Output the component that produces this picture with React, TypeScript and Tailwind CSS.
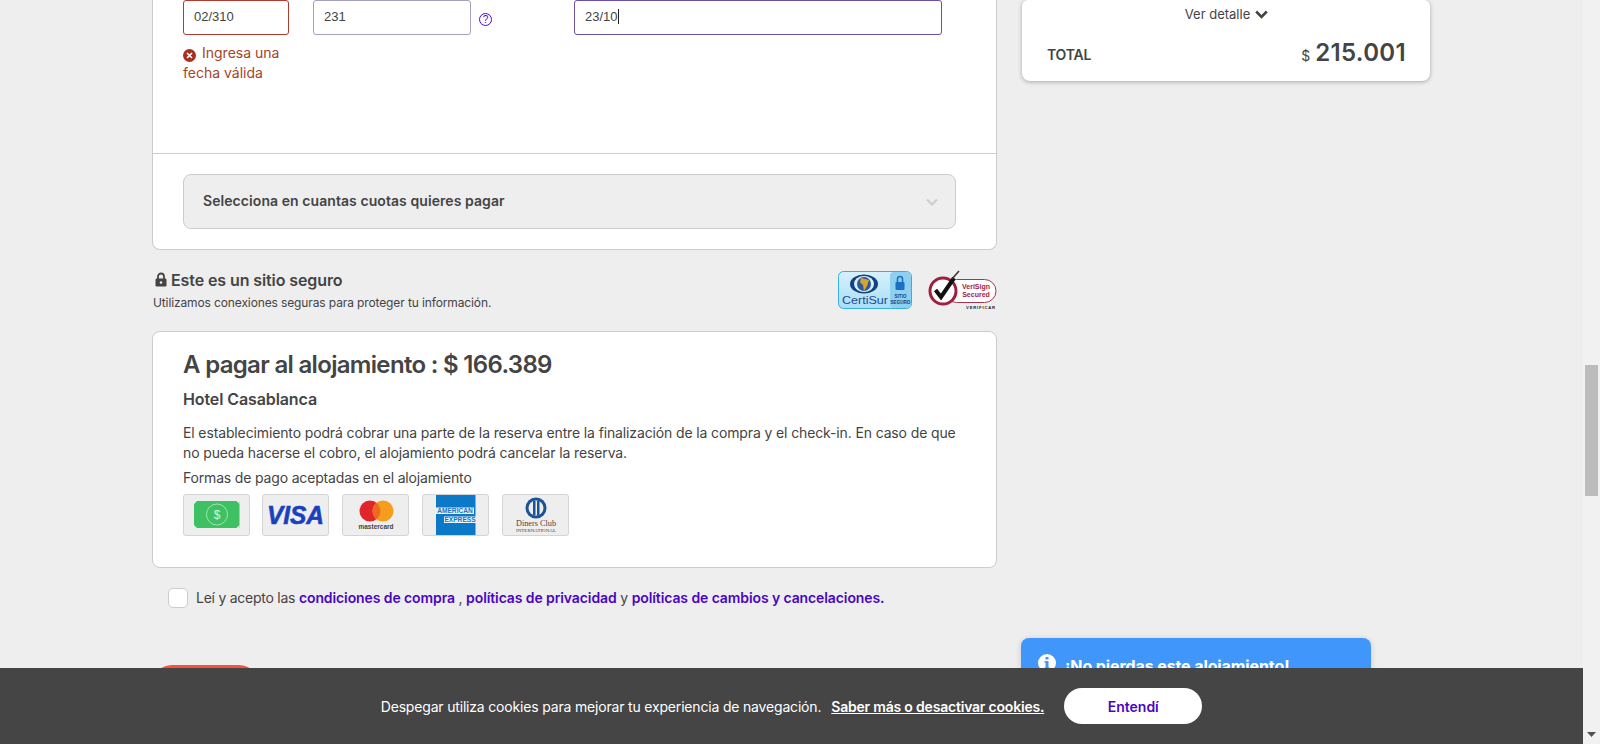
import React from "react";

const sans = "font-['Inter','Roboto','Liberation_Sans',sans-serif]";

function PayTile({ children, className = "" }: { children: React.ReactNode; className?: string }) {
  return (
    <div className={`w-[67px] h-[42px] bg-[#eeeeee] border border-[#d4d4d4] rounded-[3px] overflow-hidden ${className}`}>
      <svg width="65" height="40" viewBox="0 0 65 40">{children}</svg>
    </div>
  );
}

function Certisur() {
  return (
    <svg width="74" height="38" viewBox="0 0 74 38">
      <defs>
        <linearGradient id="cs" x1="0" y1="0" x2="0" y2="1">
          <stop offset="0" stopColor="#d6f1fc" />
          <stop offset="1" stopColor="#a9def7" />
        </linearGradient>
      </defs>
      <rect x="0.5" y="0.5" width="73" height="37" rx="5" fill="url(#cs)" stroke="#35aee6" />
      <rect x="52" y="1" width="21" height="36" rx="4" fill="#8dd0ef" />
      <ellipse cx="26" cy="13" rx="14" ry="9.5" fill="#17407f" />
      <ellipse cx="26" cy="13" rx="10" ry="8" fill="#d6f1fc" />
      <circle cx="26" cy="13" r="7" fill="#2a5a9a" />
      <path d="M23 7 L31 9 L29 15 L26 20 L25 14 L22 11 Z" fill="#d9a32c" />
      <text x="4" y="33" fontSize="11.5" fontFamily="Liberation Sans" fill="#1c4a96" textLength="46" lengthAdjust="spacingAndGlyphs">CertiSur</text>
      <rect x="57.5" y="11" width="9" height="8" rx="1" fill="#1d6fc0" />
      <path d="M59.5 11 V8 a2.5 2.5 0 0 1 5 0 V11" fill="none" stroke="#1d6fc0" strokeWidth="1.6" />
      <text x="62.5" y="27" textAnchor="middle" fontSize="4.6" fontWeight="700" fontFamily="Liberation Sans" fill="#16407e">SITIO</text>
      <text x="62.5" y="33" textAnchor="middle" fontSize="4.6" fontWeight="700" fontFamily="Liberation Sans" fill="#16407e">SEGURO</text>
    </svg>
  );
}

function Verisign() {
  return (
    <svg width="70" height="40" viewBox="0 0 70 40">
      <rect x="18" y="9.5" width="51" height="23" rx="11.5" fill="#fff" stroke="#a8334f" strokeWidth="1" />
      <circle cx="16" cy="21" r="13" fill="#fff" stroke="#a01f3f" strokeWidth="3" />
      <path d="M8.5 20 L14 27 L27 8" fill="none" stroke="#111" strokeWidth="4" />
      <path d="M25 9 L32 1" stroke="#333" strokeWidth="1.5" />
      <text x="49" y="19" textAnchor="middle" fontSize="7" fontWeight="700" fontFamily="Liberation Sans" fill="#a8213f">VeriSign</text>
      <text x="49" y="27" textAnchor="middle" fontSize="7" fontWeight="700" fontFamily="Liberation Sans" fill="#a8213f">Secured</text>
      <text x="54" y="38.5" textAnchor="middle" fontSize="4.2" fontWeight="700" letterSpacing="0.8" fontFamily="Liberation Sans" fill="#222">VERIFICAR</text>
    </svg>
  );
}

export default function App() {
  return (
    <div className={`relative h-[744px] w-[1600px] overflow-hidden bg-[#eeeeee] text-[#444444] ${sans}`}>
      <div className="flex h-full">
        <div className="flex flex-1 pl-[152px] gap-[25px] items-start">
          {/* Left column */}
          <div className="w-[845px] flex flex-col">
            <section className="bg-white border border-t-0 border-[#cccccc] rounded-b-lg">
              <div className="h-[153px] flex pl-[30px]">
                <div className="w-[130px]">
                  <div className="w-[106px] h-[35px] border border-[#b03a2e] rounded-[3px] pl-[10px] pb-[2px] flex items-center text-[13px] font-['Liberation_Sans',sans-serif]">
                    02/310
                  </div>
                  <p className="w-[106px] mt-[8px] text-[14px] leading-[20.4px] text-[#a3442b]">
                    <span className="inline-flex w-[13px] h-[13px] mr-[6px] align-[-1px] rounded-full bg-[#a5301f] items-center justify-center">
                      <svg width="7" height="7" viewBox="0 0 7 7">
                        <path d="M1 1 L6 6 M6 1 L1 6" stroke="#fff" strokeWidth="1.6" />
                      </svg>
                    </span>
                    Ingresa una fecha válida
                  </p>
                </div>
                <div className="w-[261px] flex items-start">
                  <div className="w-[158px] h-[35px] border border-[#a79fbd] rounded-[3px] pl-[10px] pb-[2px] flex items-center text-[13px] font-['Liberation_Sans',sans-serif]">
                    231
                  </div>
                  <span className="ml-[8px] mt-[13px] w-[13px] h-[13px] rounded-full border border-[#4f08d8] text-[#4f08d8] text-[10px] leading-[11px] text-center font-['Liberation_Sans',sans-serif]">
                    ?
                  </span>
                </div>
                <div className="w-[368px] h-[35px] border border-[#6a4fa3] rounded-[3px] pl-[10px] pb-[2px] flex items-center text-[13px] font-['Liberation_Sans',sans-serif]">
                  23/10
                  <span className="w-px h-[15px] bg-[#222222]" />
                </div>
              </div>
              <div className="border-t border-[#cccccc] pt-[20px] pb-[20px] pl-[30px] pr-[40px]">
                <div className="h-[55px] bg-[#eeeeee] border border-[#cccccc] rounded-lg flex items-center justify-between pl-[19px] pr-[17px]">
                  <span className="pb-[2px] text-[14px] font-semibold tracking-[0.07px]">Selecciona en cuantas cuotas quieres pagar</span>
                  <svg width="12" height="8" viewBox="0 0 12 8">
                    <path d="M1 1.5 L6 6.5 L11 1.5" fill="none" stroke="#cccccc" strokeWidth="2" />
                  </svg>
                </div>
              </div>
            </section>

            <section className="mt-[20px] h-[40px] flex items-center justify-between">
              <div className="pl-px pb-px">
                <div className="flex items-center text-[16px] leading-[20px] font-semibold tracking-[-0.1px]">
                  <svg className="ml-[2px] mr-[4px]" width="12" height="15" viewBox="0 0 12 15">
                    <path d="M3 7 V4.5 a3 3 0 0 1 6 0 V7" fill="none" stroke="#444" strokeWidth="1.8" />
                    <rect x="0.5" y="6.5" width="11" height="8" rx="1.2" fill="#444" />
                    <circle cx="6" cy="10.5" r="1.3" fill="#eee" />
                  </svg>
                  Este es un sitio seguro
                </div>
                <p className="mt-[6px] text-[12px] leading-[14px] tracking-[-0.12px]">Utilizamos conexiones seguras para proteger tu información.</p>
              </div>
              <div className="flex items-center gap-[15px]">
                <Certisur />
                <Verisign />
              </div>
            </section>

            <section className="mt-[21px] h-[237px] bg-white border border-[#cccccc] rounded-lg pl-[30px] pt-[18px]">
              <h2 className="text-[24px] leading-[30px] font-semibold tracking-[-0.68px]">A pagar al alojamiento : $ 166.389</h2>
              <h3 className="mt-[9px] text-[16px] leading-[20px] font-semibold tracking-[-0.1px]">Hotel Casablanca</h3>
              <p className="mt-[14px] text-[14px] leading-[20px] whitespace-nowrap tracking-[-0.13px]">
                El establecimiento podrá cobrar una parte de la reserva entre la finalización de la compra y el check-in. En caso de que
                <br />
                no pueda hacerse el cobro, el alojamiento podrá cancelar la reserva.
              </p>
              <p className="mt-[5px] text-[14px] leading-[20px] tracking-[-0.17px]">Formas de pago aceptadas en el alojamiento</p>
              <div className="mt-[6px] flex gap-[13px]">
                <PayTile className="mr-[-1px]">
                  <rect x="10" y="6" width="45.5" height="27" fill="#3fc163" />
                  <path d="M10 6 h3 l-3 3 Z M55.5 6 h-3 l3 3 Z M10 33 h3 l-3 -3 Z M55.5 33 h-3 l3 -3 Z" fill="#e9f7ec" />
                  <circle cx="33" cy="19.5" r="10.5" fill="none" stroke="#9fe3b0" strokeWidth="1" />
                  <text x="33" y="24" textAnchor="middle" fontSize="12" fontFamily="Liberation Sans" fill="#d6f5de">$</text>
                </PayTile>
                <PayTile>
                  <text x="4" y="29" fontSize="26" fontWeight="700" fontStyle="italic" fontFamily="Liberation Sans" fill="#1a3fc0" stroke="#1a3fc0" strokeWidth="0.6" textLength="57" lengthAdjust="spacingAndGlyphs">VISA</text>
                </PayTile>
                <PayTile>
                  <circle cx="27" cy="16" r="10.5" fill="#e0262a" />
                  <circle cx="40" cy="16" r="10.5" fill="#f59e1e" />
                  <path d="M33.5 7.8 a10.5 10.5 0 0 1 0 16.4 a10.5 10.5 0 0 1 0 -16.4 Z" fill="#ee6a1f" />
                  <text x="33" y="34" textAnchor="middle" fontSize="6.5" fontWeight="700" fontFamily="Liberation Sans" fill="#444">mastercard</text>
                </PayTile>
                <PayTile>
                  <rect x="13" y="0" width="39.5" height="40" fill="#0b78c8" />
                  <rect x="13" y="12.5" width="38" height="6.5" fill="#e9f4fb" />
                  <rect x="21" y="21.5" width="32" height="6.5" fill="#e9f4fb" />
                  <text x="32" y="18" textAnchor="middle" fontSize="6.6" fontWeight="700" fontFamily="Liberation Sans" fill="#0b78c8">AMERICAN</text>
                  <text x="37" y="27" textAnchor="middle" fontSize="6.6" fontWeight="700" fontFamily="Liberation Sans" fill="#0b78c8">EXPRESS</text>
                </PayTile>
                <PayTile>
                  <circle cx="33" cy="13" r="10.5" fill="#1b5394" />
                  <circle cx="33" cy="13" r="7.5" fill="#eeeeee" />
                  <rect x="30" y="6" width="2.5" height="14" fill="#1b5394" />
                  <rect x="34" y="6" width="2.5" height="14" fill="#1b5394" />
                  <text x="33" y="31" textAnchor="middle" fontSize="9" fontFamily="Liberation Serif" fill="#444" textLength="40" lengthAdjust="spacingAndGlyphs">Diners Club</text>
                  <text x="33" y="36.5" textAnchor="middle" fontSize="4.5" fontFamily="Liberation Serif" fill="#444" textLength="40" lengthAdjust="spacingAndGlyphs">INTERNATIONAL</text>
                </PayTile>
              </div>
            </section>

            <div className="mt-[19px] ml-[16px] flex items-center text-[14px]">
              <span className="w-[20px] h-[20px] bg-white border border-[#cccccc] rounded-[5px]" />
              <p className="ml-[8px] pb-px whitespace-nowrap tracking-[-0.25px]">
                Leí y acepto las{" "}
                <a className="font-semibold text-[#4a06c4] tracking-[-0.1px]">condiciones de compra</a> ,{" "}
                <a className="font-semibold text-[#4a06c4] tracking-[-0.1px]">políticas de privacidad</a> y{" "}
                <a className="font-semibold text-[#4a06c4] tracking-[-0.1px]">políticas de cambios y cancelaciones.</a>
              </p>
            </div>

            <div className="mt-[56px] w-[107px] h-[48px] rounded-[20px] bg-[#f9503f]" />
          </div>

          {/* Right column */}
          <div className="w-[408px] flex flex-col">
            <section className="h-[81px] bg-white rounded-b-lg rounded-t-md shadow-[0_1px_4px_rgba(0,0,0,0.3)] pl-[25px] pr-[24px]">
              <div className="pt-[6px] flex items-center justify-center text-[13px] leading-[16px]">
                Ver detalle
                <svg className="ml-[5px]" width="13" height="9" viewBox="0 0 13 9">
                  <path d="M1.2 1.5 L6.5 6.8 L11.8 1.5" fill="none" stroke="#444" strokeWidth="2.6" />
                </svg>
              </div>
              <div className="mt-[16px] flex items-center justify-between">
                <span className="pt-[2px] text-[14px] font-semibold tracking-[-0.2px]">TOTAL</span>
                <span className="flex items-baseline">
                  <span className="text-[14px] mr-[5px]">$</span>
                  <span className="text-[24px] leading-[30px] font-semibold tracking-[0.35px]">215.001</span>
                </span>
              </div>
            </section>
            <section className="mt-[557px] ml-[-1px] w-[350px] h-[80px] bg-[#4096fb] rounded-lg shadow-[0_1px_6px_rgba(0,0,0,0.15)] pl-[17px] pt-[16px] flex items-start text-white">
              <span className="w-[18px] h-[18px] rounded-full bg-white flex items-center justify-center">
                <svg width="6" height="12" viewBox="0 0 6 12">
                  <rect x="1.5" y="0" width="3" height="2.5" fill="#4096fb" />
                  <path d="M0.5 4 H4.5 V10.5 H5.5 V12 H0.5 V10.5 H1.5 V5.5 H0.5 Z" fill="#4096fb" />
                </svg>
              </span>
              <span className="ml-[9px] pt-[2px] text-[16px] leading-[20px] font-bold tracking-[-0.1px]">¡No pierdas este alojamiento!</span>
            </section>
          </div>
        </div>

        {/* Scrollbar */}
        <div className="w-[17px] shrink-0 bg-[#f1f1f1] relative" />
      </div>

      <div className="absolute right-[2px] top-[365px] w-[13px] h-[131px] bg-[#bcbcbc]" />
      <svg className="absolute left-[1587px] top-[732px]" width="9" height="5" viewBox="0 0 9 5">
        <path d="M0 0 H9 L4.5 5 Z" fill="#505050" />
      </svg>

      {/* Cookie bar */}
      <div className="absolute left-0 top-[668px] w-[1583px] h-[76px] bg-[#454545] flex items-center justify-center text-white text-[14px]">
        <span className="tracking-[-0.18px]">Despegar utiliza cookies para mejorar tu experiencia de navegación.</span>
        <a className="ml-[10px] font-semibold underline tracking-[-0.2px]">Saber más o desactivar cookies.</a>
        <button className="ml-[20px] w-[138px] h-[36px] rounded-full bg-white text-[#4a06c4] text-[14px] font-semibold">
          Entendí
        </button>
      </div>
    </div>
  );
}
